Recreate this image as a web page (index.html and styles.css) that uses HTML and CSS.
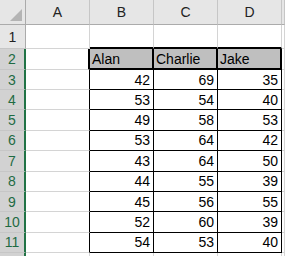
FILE: index.html
```html
<!DOCTYPE html>
<html lang="en">
<head>
    <meta charset="UTF-8">
    <title>Sheet</title>
    <link rel="stylesheet" href="styles.css">
</head>
<body>
    <div class="sheet">
        <!-- column headers -->
        <div class="corner"><span class="tri"></span></div>
        <div class="hd">A</div>
        <div class="hd">B</div>
        <div class="hd">C</div>
        <div class="hd">D</div>
        <div class="hd"></div>

        <!-- row 1 -->
        <div class="rh">1</div>
        <div class="c"></div>
        <div class="c top"></div>
        <div class="c top"></div>
        <div class="c top"></div>
        <div class="c"></div>

        <!-- row 2 -->
        <div class="rh sel">2</div>
        <div class="c lft thick"></div>
        <div class="th">Alan</div>
        <div class="th">Charlie</div>
        <div class="th">Jake</div>
        <div class="c"></div>

        <div class="rh sel">3</div>
        <div class="c lft"></div>
        <div class="td">42</div><div class="td">69</div><div class="td">35</div>
        <div class="c"></div>

        <div class="rh sel">4</div>
        <div class="c lft"></div>
        <div class="td">53</div><div class="td">54</div><div class="td">40</div>
        <div class="c"></div>

        <div class="rh sel">5</div>
        <div class="c lft"></div>
        <div class="td">49</div><div class="td">58</div><div class="td">53</div>
        <div class="c"></div>

        <div class="rh sel">6</div>
        <div class="c lft"></div>
        <div class="td">53</div><div class="td">64</div><div class="td">42</div>
        <div class="c"></div>

        <div class="rh sel">7</div>
        <div class="c lft"></div>
        <div class="td">43</div><div class="td">64</div><div class="td">50</div>
        <div class="c"></div>

        <div class="rh sel">8</div>
        <div class="c lft"></div>
        <div class="td">44</div><div class="td">55</div><div class="td">39</div>
        <div class="c"></div>

        <div class="rh sel">9</div>
        <div class="c lft"></div>
        <div class="td">45</div><div class="td">56</div><div class="td">55</div>
        <div class="c"></div>

        <div class="rh sel">10</div>
        <div class="c lft"></div>
        <div class="td">52</div><div class="td">60</div><div class="td">39</div>
        <div class="c"></div>

        <div class="rh sel">11</div>
        <div class="c lft"></div>
        <div class="td">54</div><div class="td">53</div><div class="td">40</div>
        <div class="c"></div>

        <!-- row 12, cut off -->
        <div class="rh sel"></div>
        <div class="c"></div>
        <div class="c"></div>
        <div class="c"></div>
        <div class="c"></div>
        <div class="c"></div>
    </div>
</body>
</html>
```

FILE: styles.css
```css
* {
    margin: 0;
    padding: 0;
    box-sizing: border-box;
}

body {
    background: #fff;
    overflow: hidden;
    font-family: 'Liberation Sans', Arial, sans-serif;
    font-size: 14px;
    color: #000;
}

.sheet {
    display: grid;
    grid-template-columns: 26px 64px 64px 64px 64px 1fr;
    grid-template-rows: 25px 24px 21px 20px repeat(8, 20.4px) 10px;
    width: 285px;
    height: 256px;
}

.sheet > div {
    display: flex;
    align-items: center;
    overflow: hidden;
    white-space: nowrap;
}

.corner {
    background: #e6e6e6;
    border-right: 1px solid #ababab;
    border-bottom: 1px solid #ababab;
    justify-content: flex-end;
    align-items: flex-end !important;
    padding: 0 3px 3px 0;
}

.tri {
    width: 0;
    height: 0;
    border-left: 12px solid transparent;
    border-bottom: 12px solid #b4b4b4;
}

.hd {
    background: #e6e6e6;
    border-right: 1px solid #c6c6c6;
    border-bottom: 1px solid #ababab;
    justify-content: center;
    color: #222;
}

.rh {
    background: #e6e6e6;
    border-right: 1px solid #ababab;
    border-bottom: 1px solid #c6c6c6;
    justify-content: center;
    color: #222;
}

.rh.sel {
    background: #d2d2d2;
    border-right: 2px solid #217346;
    color: #1e6b43;
}

.c {
    border-right: 1px solid #d4d4d4;
    border-bottom: 1px solid #d4d4d4;
}

.c.top {
    border-bottom: 2px solid #000;
}

.c.lft {
    border-right: 1px solid #000;
}

.c.lft.thick {
    border-right: 2px solid #000;
}

.th {
    background: #bfbfbf;
    border-right: 2px solid #000;
    border-bottom: 2px solid #000;
    padding-left: 2px;
}

.td {
    border-right: 1px solid #000;
    border-bottom: 1px solid #000;
    justify-content: flex-end;
    padding-right: 3px;
}
```
